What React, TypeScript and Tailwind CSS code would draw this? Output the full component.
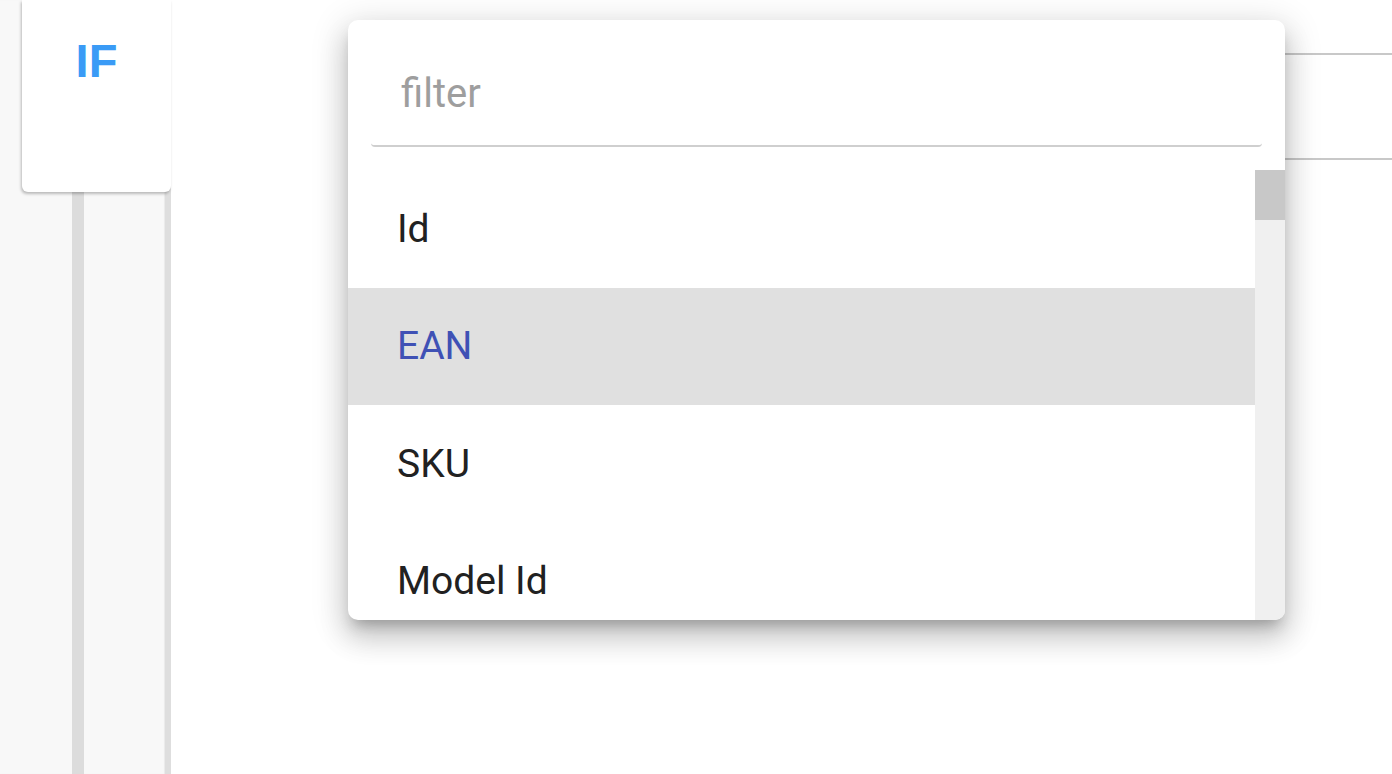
import React from "react";

const items = ["Id", "EAN", "SKU", "Model Id"];

export default function App() {
  return (
    <div className="flex h-[774px] w-[1392px] overflow-hidden bg-white">
      {/* Sidebar */}
      <aside className="flex h-full w-[171px] shrink-0 flex-col border-r-[6px] border-[#dedede] bg-[#f8f8f8] shadow-[inset_-1px_0_1px_rgba(0,0,0,0.06)]">
        <div className="relative z-10 ml-[22px] mr-[-6px] flex h-[192px] shrink-0 justify-center rounded-b-[6px] bg-white pt-[33px] shadow-[-1px_2px_3px_rgba(0,0,0,0.25)]">
          <span className="font-['Liberation_Sans',Arial,sans-serif] text-[47px] font-bold leading-[55px] text-[#3a9bf6]">
            IF
          </span>
        </div>
        <div className="ml-[72px] w-[12px] flex-1 bg-[#dcdcdc]" />
      </aside>

      {/* Main */}
      <main className="relative flex flex-1 flex-col pl-[177px] pt-[53px]">
        <div className="h-[2px] w-full bg-[#c8c8c8]" />
        <div className="mt-[103px] h-[2px] w-full bg-[#c8c8c8]" />

        {/* Dropdown menu */}
        <div className="absolute left-[177px] top-[20px] flex h-[600px] w-[937px] flex-col overflow-hidden rounded-[10px] bg-white font-['Roboto',sans-serif] shadow-[0_10px_14px_-6px_rgba(0,0,0,0.25),0_18px_28px_2px_rgba(0,0,0,0.14),0_7px_34px_6px_rgba(0,0,0,0.12)]">
          <div className="shrink-0 px-[23px] pb-[23px] pt-[22px]">
            <input
              readOnly
              placeholder="filter"
              className="block h-[105px] w-full rounded-[4px] border-b-2 border-[#cfcfcf] bg-transparent pl-[30px] text-[40px] text-[#212121] outline-none placeholder:text-[#9e9e9e]"
            />
          </div>
          <div className="flex min-h-0 flex-1">
            <ul className="flex-1 overflow-hidden">
              {items.map((it) => (
                <li
                  key={it}
                  className={
                    it === "EAN"
                      ? "flex h-[117.5px] items-center bg-[#e0e0e0] pl-[49px] text-[39px] text-[#3f51b5]"
                      : "flex h-[117.5px] items-center pl-[49px] text-[39px] text-[#212121]"
                  }
                >
                  {it}
                </li>
              ))}
            </ul>
            <div className="w-[30px] shrink-0 bg-[#f0f0f0]">
              <div className="h-[50px] w-full bg-[#c8c8c8]" />
            </div>
          </div>
        </div>
      </main>
    </div>
  );
}
